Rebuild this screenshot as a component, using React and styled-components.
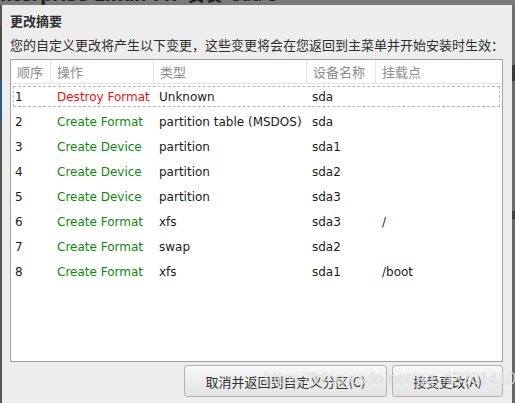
import React from 'react';
import styled, { createGlobalStyle } from 'styled-components';

const GlobalStyle = createGlobalStyle`
  html, body {
    margin: 0;
    padding: 0;
    background: #6e6e6e;
  }
`

const Page = styled.div`
  position: relative;
  width: 515px;
  height: 403px;
  overflow: hidden;
  display: grid;
  grid-template-columns: 2px 510px 3px;
  grid-template-rows: 5px 398px;
  background: #6e6e6e;
`

const TopStrip = styled.div`
  grid-column: 1 / 4;
  overflow: hidden;
  display: flex;
  background: #7a7a7a;
`

const StripText = styled.div`
  margin-top: -13px;
  font: bold 17px/17px "DejaVu Sans", "Noto Sans CJK SC", sans-serif;
  color: #1e1e1e;
  white-space: nowrap;
  width: ${p => p.$w}px;
  padding-left: ${p => p.$pad || 0}px;
  border-right: ${p => (p.$divider ? '1px solid #5a5a5a' : 'none')};
  font-weight: ${p => (p.$light ? 'normal' : 'bold')};
`

const LeftEdge = styled.div`
  background: linear-gradient(#555 0, #555 20px, #4d4d4d 20px, #4d4d4d 75px, #2d5a8e 75px, #2d5a8e 115px, #555 115px);
`

const RightEdge = styled.div`
  background: linear-gradient(#707070 0, #707070 60px, #3a3a3a 60px, #3a3a3a 76px, #6a6a6a 76px, #6a6a6a 206px, #3f3f3f 206px, #3f3f3f 214px, #666 214px);
`

const Dialog = styled.div`
  background: #ededed;
  display: flex;
  flex-direction: column;
  padding: 8px 9px 6px 8px;
  box-sizing: border-box;
  font-family: "Noto Sans CJK SC", "DejaVu Sans", sans-serif;
`

const Title = styled.div`
  font-size: 13px;
  line-height: 16px;
  font-weight: bold;
  color: #2e2e2e;
`

const Subtitle = styled.div`
  margin-top: 8px;
  font-size: 13px;
  line-height: 16px;
  color: #2e2e2e;
  white-space: nowrap;
`

const TableFrame = styled.div`
  margin-top: 6px;
  flex: 1;
  background: #fff;
  border: 1px solid #a2a2a2;
  display: flex;
  flex-direction: column;
`

const COLS = '40px 103px 153px 69px 1fr'

const HeaderRow = styled.div`
  display: grid;
  grid-template-columns: ${COLS};
  height: 23px;
  border-bottom: 1px solid #e2e2e2;
`

const HeaderCell = styled.div`
  display: flex;
  align-items: center;
  padding-left: 6px;
  font-size: 13px;
  color: #8c8c8c;
  border-left: ${p => (p.$first ? 'none' : '1px solid #e4e4e4')};
  margin-left: ${p => (p.$first ? 0 : -1)}px;
`

const Row = styled.div`
  position: relative;
  display: grid;
  grid-template-columns: ${COLS};
  height: 25px;
  padding-top: 1px;
  box-sizing: border-box;
  align-items: center;
  font: 12px "DejaVu Sans", sans-serif;
  color: #1a1a1a;

  ${p => p.$focused && `
    &::after {
      content: '';
      position: absolute;
      top: 2px;
      bottom: 2px;
      left: 2px;
      right: 2px;
      border: 1px dashed #b8b8b8;
    }
  `}
`

const Cell = styled.div`
  padding-left: ${p => p.$pad || 5}px;
  white-space: nowrap;
  color: ${p => p.$color || 'inherit'};
`

const ButtonRow = styled.div`
  margin-top: 3px;
  display: flex;
  justify-content: flex-end;
  gap: 5px;
`

const Button = styled.button`
  width: ${p => p.$w}px;
  height: 32px;
  padding: 0;
  border: 1px solid #b4b4b4;
  border-radius: 3px;
  background: linear-gradient(#f7f7f7, #e4e4e4);
  font: 13px "Noto Sans CJK SC", "DejaVu Sans", sans-serif;
  color: #333;
`

const Watermark = styled.div`
  position: absolute;
  left: 264px;
  top: 370px;
  font: 16px "Liberation Sans", Arial, sans-serif;
  color: rgba(255, 255, 255, 0.7);
  text-shadow: 0 0 1px rgba(90, 90, 90, 0.4);
  white-space: nowrap;
  letter-spacing: 0.2px;
  pointer-events: none;
`

const actions = [
  { n: 1, op: 'Destroy Format', type: 'Unknown', dev: 'sda', mount: '' },
  { n: 2, op: 'Create Format', type: 'partition table (MSDOS)', dev: 'sda', mount: '' },
  { n: 3, op: 'Create Device', type: 'partition', dev: 'sda1', mount: '' },
  { n: 4, op: 'Create Device', type: 'partition', dev: 'sda2', mount: '' },
  { n: 5, op: 'Create Device', type: 'partition', dev: 'sda3', mount: '' },
  { n: 6, op: 'Create Format', type: 'xfs', dev: 'sda3', mount: '/' },
  { n: 7, op: 'Create Format', type: 'swap', dev: 'sda2', mount: '' },
  { n: 8, op: 'Create Format', type: 'xfs', dev: 'sda1', mount: '/boot' },
]

const App = () => {
  return (
    <Page>
      <GlobalStyle />
      <TopStrip>
        <StripText $w={208}>nterprise Linux 7.7 安装</StripText>
        <StripText $w={120} $pad={24} $light>sda 3</StripText>
      </TopStrip>
      <LeftEdge />
      <Dialog>
        <Title>更改摘要</Title>
        <Subtitle>您的自定义更改将产生以下变更，这些变更将会在您返回到主菜单并开始安装时生效：</Subtitle>
        <TableFrame>
          <HeaderRow>
            <HeaderCell $first>顺序</HeaderCell>
            <HeaderCell>操作</HeaderCell>
            <HeaderCell>类型</HeaderCell>
            <HeaderCell>设备名称</HeaderCell>
            <HeaderCell>挂载点</HeaderCell>
          </HeaderRow>
          {actions.map(a => (
            <Row key={a.n} $focused={a.n === 1}>
              <Cell $pad={4}>{a.n}</Cell>
              <Cell $pad={6} $color={a.op.startsWith('Destroy') ? '#f01010' : '#0c8a0c'}>{a.op}</Cell>
              <Cell>{a.type}</Cell>
              <Cell>{a.dev}</Cell>
              <Cell $pad={6}>{a.mount}</Cell>
            </Row>
          ))}
        </TableFrame>
        <ButtonRow>
          <Button $w={203}>取消并返回到自定义分区(C)</Button>
          <Button $w={111}>接受更改(A)</Button>
        </ButtonRow>
      </Dialog>
      <RightEdge />
      <Watermark>https://blog.csdn.net/qq_43301410</Watermark>
    </Page>
  );
}

export default App;
